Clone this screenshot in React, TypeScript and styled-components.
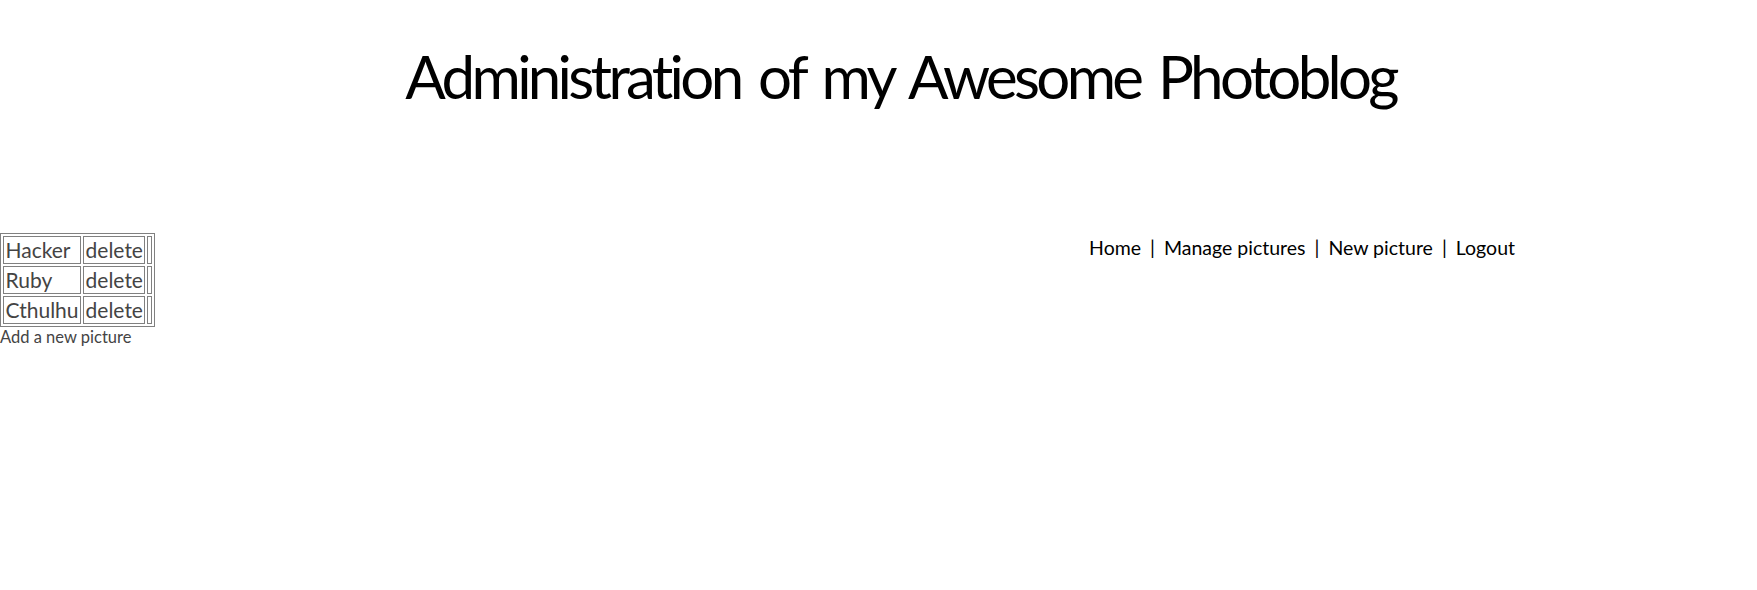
import React from 'react';
import styled, { createGlobalStyle } from 'styled-components';

const GlobalStyle = createGlobalStyle`
  html, body {
    margin: 0;
    padding: 0;
    background: #fff;
  }
  body {
    font-family: 'Lato', 'Open Sans', sans-serif;
    color: #444;
  }
`;

const Header = styled.header`
  padding: 40px 0 0 44px;
  height: 200px;
  box-sizing: border-box;
  text-align: center;
`;

const Title = styled.h1`
  margin: 0;
  font-size: 60px;
  font-weight: normal;
  letter-spacing: -3.7px;
  word-spacing: 6px;
  color: #000;
  line-height: 72px;
`;

const Main = styled.div`
  display: flex;
  align-items: flex-start;
  padding-top: 33px;
`;

const Listing = styled.div`
  display: flex;
  flex-direction: column;
`;

const PictureTable = styled.table`
  border: 1px solid #808080;
  border-spacing: 2px;
  font-size: 21px;
  color: #444;
`;

const Cell = styled.td<{ $empty?: boolean }>`
  border: 1px solid #808080;
  padding: ${(p) => (p.$empty ? '0 1.5px' : '1px 1.5px')};
  line-height: 24px;
`;

const AddLink = styled.a`
  font-size: 16.5px;
  color: #444;
  text-decoration: none;
  line-height: 20px;
`;

const Nav = styled.nav`
  margin-left: auto;
  margin-right: 242px;
  padding-top: 3px;
  font-size: 19.5px;
  color: #000;
`;

const NavLink = styled.a`
  color: #000;
  text-decoration: none;
`;

const Sep = styled.span`
  margin: 0 9px;
`;

const pictures = ['Hacker', 'Ruby', 'Cthulhu'];
const links = ['Home', 'Manage pictures', 'New picture', 'Logout'];

export default function App() {
  return (
    <>
      <GlobalStyle />
      <Header>
        <Title>Administration of my Awesome Photoblog</Title>
      </Header>
      <Main>
        <Listing>
          <PictureTable>
            <tbody>
              {pictures.map((name) => (
                <tr key={name}>
                  <Cell>{name}</Cell>
                  <Cell>delete</Cell>
                  <Cell $empty />
                </tr>
              ))}
            </tbody>
          </PictureTable>
          <AddLink href="#">Add a new picture</AddLink>
        </Listing>
        <Nav>
          {links.map((l, i) => (
            <React.Fragment key={l}>
              {i > 0 && <Sep>|</Sep>}
              <NavLink href="#">{l}</NavLink>
            </React.Fragment>
          ))}
        </Nav>
      </Main>
    </>
  );
}
